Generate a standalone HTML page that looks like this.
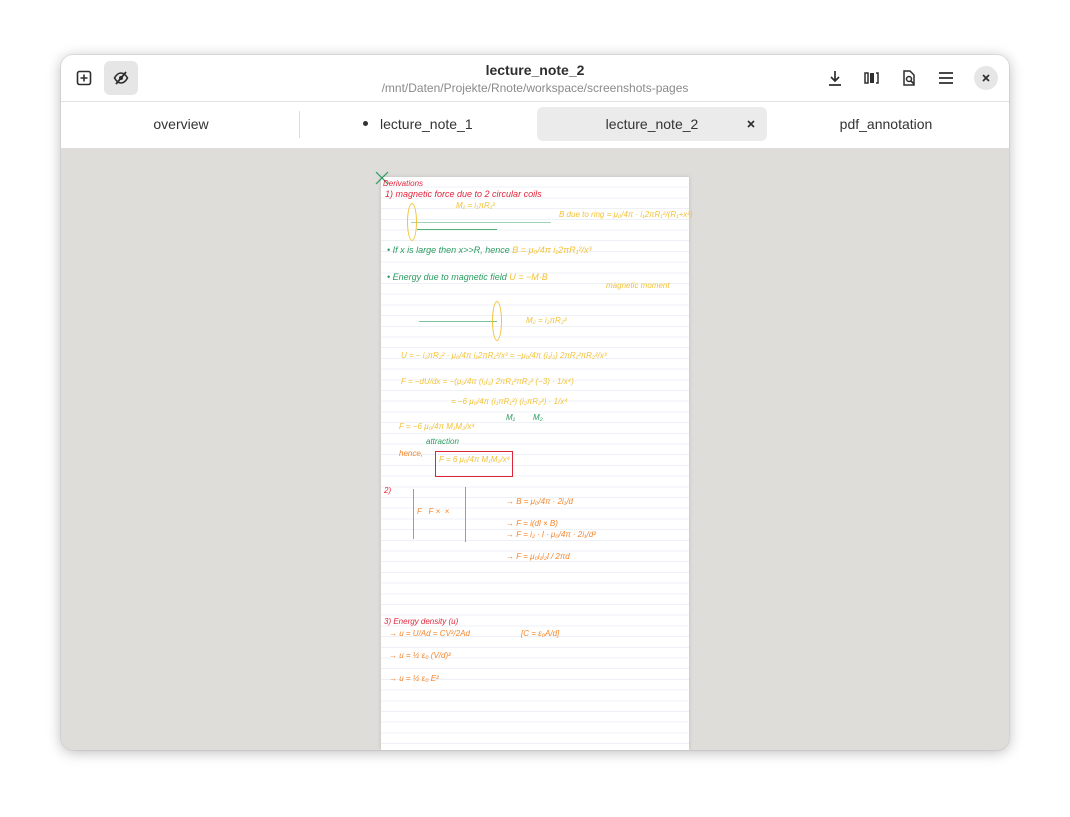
<!DOCTYPE html>
<html><head><meta charset="utf-8"><style>
*{margin:0;padding:0;box-sizing:border-box}
body{width:1070px;height:817px;background:#fff;font-family:"Liberation Sans",sans-serif;position:relative;overflow:hidden}
.win{position:absolute;left:61px;top:55px;width:948px;height:695px;border-radius:12px;overflow:hidden;background:#deddda;box-shadow:0 2px 14px rgba(0,0,0,.28),0 0 0 1px rgba(0,0,0,.06)}
.hdr{position:absolute;left:0;top:0;width:948px;height:47px;background:#fff;border-bottom:1px solid #e2e2e2}
.tabs{position:absolute;left:0;top:47px;width:948px;height:46px;background:#fff}
.t{position:absolute;font-size:14px;color:#333;text-align:center}
.btn{position:absolute;width:34px;height:34px;border-radius:6px;top:6px}
.page{position:absolute;left:320px;top:122px;width:308px;height:573px;background:#fff;
background-image:repeating-linear-gradient(to bottom,transparent 0,transparent 9.7px,#edf1f7 9.7px,#edf1f7 10.7px);box-shadow:0 0 4px rgba(0,0,0,.15)}
.h{position:absolute;font-style:italic;font-size:8px;white-space:nowrap;font-family:"Liberation Sans",sans-serif}
.r{color:#e0243a}.y{color:#f3c237}.g{color:#2b9b5f}.o{color:#f4852a}
</style></head><body>
<div class="win">
 <div class="hdr">
  <div class="btn" style="left:6px"></div>
  <svg style="position:absolute;left:15px;top:15px" width="16" height="16" viewBox="0 0 16 16"><rect x="1.5" y="1.5" width="13" height="13" rx="2" fill="none" stroke="#2e2e2e" stroke-width="1.6"/><path d="M8 4.5v7M4.5 8h7" stroke="#2e2e2e" stroke-width="1.6"/></svg>
  <div class="btn" style="left:43px;background:#e6e6e6"></div>
  <svg style="position:absolute;left:52px;top:15px" width="16" height="16" viewBox="0 0 16 16"><path d="M1.5 8c2-3.5 4.2-5 6.5-5s4.5 1.5 6.5 5c-2 3.5-4.2 5-6.5 5S3.5 11.5 1.5 8z" fill="none" stroke="#2e2e2e" stroke-width="1.6"/><circle cx="8" cy="8" r="2" fill="#2e2e2e"/><path d="M3 14L13 2" stroke="#2e2e2e" stroke-width="1.8"/></svg>
  <div class="t" style="left:0;width:948px;top:7px;font-weight:bold;font-size:14px;color:#2e2e2e">lecture_note_2</div>
  <div class="t" style="left:0;width:948px;top:26px;font-size:12px;color:#8a8a8a">/mnt/Daten/Projekte/Rnote/workspace/screenshots-pages</div>
  <svg style="position:absolute;left:766px;top:15px" width="16" height="16" viewBox="0 0 16 16"><path d="M8 1v10M4 7l4 4 4-4M2 15h12" fill="none" stroke="#2e2e2e" stroke-width="1.7"/></svg>
  <svg style="position:absolute;left:803px;top:15px" width="16" height="16" viewBox="0 0 16 16"><rect x="1" y="3" width="3" height="10" fill="none" stroke="#2e2e2e" stroke-width="1.5"/><rect x="6" y="3" width="4" height="10" fill="#2e2e2e"/><path d="M12 3h2v10h-2" fill="none" stroke="#2e2e2e" stroke-width="1.5"/></svg>
  <svg style="position:absolute;left:840px;top:15px" width="16" height="16" viewBox="0 0 16 16"><path d="M3 1h6l4 4v10H3z" fill="none" stroke="#2e2e2e" stroke-width="1.5"/><circle cx="8" cy="9" r="2.5" fill="none" stroke="#2e2e2e" stroke-width="1.5"/><path d="M10 11l3 3" stroke="#2e2e2e" stroke-width="1.6"/></svg>
  <svg style="position:absolute;left:877px;top:15px" width="16" height="16" viewBox="0 0 16 16"><path d="M1 3h14M1 8h14M1 13h14" stroke="#2e2e2e" stroke-width="1.7"/></svg>
  <div style="position:absolute;left:913px;top:11px;width:24px;height:24px;border-radius:50%;background:#e6e6e6"></div>
  <svg style="position:absolute;left:921px;top:19px" width="8" height="8" viewBox="0 0 8 8"><path d="M1 1l6 6M7 1L1 7" stroke="#2e2e2e" stroke-width="1.7"/></svg>
 </div>
 <div class="tabs">
  <div class="t" style="left:0;width:240px;top:14px">overview</div>
  <div style="position:absolute;left:238px;top:9px;width:1px;height:27px;background:#dcdcdc"></div>
  <div style="position:absolute;left:302px;top:19px;width:5px;height:5px;border-radius:50%;background:#333"></div>
  <div class="t" style="left:319px;top:14px">lecture_note_1</div>
  <div style="position:absolute;left:476px;top:5px;width:230px;height:34px;border-radius:6px;background:#ebebeb"></div>
  <div class="t" style="left:476px;width:230px;top:14px">lecture_note_2</div>
  <svg style="position:absolute;left:686px;top:18px" width="8" height="8" viewBox="0 0 8 8"><path d="M1 1l6 6M7 1L1 7" stroke="#2e2e2e" stroke-width="1.6"/></svg>
  <div class="t" style="left:710px;width:230px;top:14px">pdf_annotation</div>
 </div>
 <div class="page">
  <svg style="position:absolute;left:-6px;top:-6px" width="14" height="14"><path d="M1 1l12 12M13 1L1 13" stroke="#2b9b5f" stroke-width="1.2"/></svg>
  <div class="h r" style="left:2px;top:2px">Derivations</div>
  <div class="h r" style="left:4px;top:12px;font-size:9px">1) magnetic force due to 2 circular coils</div>
  <div class="h y" style="left:75px;top:24px">M₁ = i₁πR₁²</div>
  <div class="h y" style="left:178px;top:33px">B due to ring = μ₀/4π · i₁2πR₁²/(R₁+x²)</div>
  <div style="position:absolute;left:30px;top:45px;width:140px;height:1px;background:#9fd4b4"></div>
  <div style="position:absolute;left:36px;top:52px;width:80px;height:1px;background:#4fb07a"></div>
  <div style="position:absolute;left:26px;top:26px;width:10px;height:38px;border:1px solid #f3c237;border-radius:50%"></div>
  <div class="h g" style="left:6px;top:68px;font-size:9px">• If x is large then  x>>R, hence  <span class="y">B = μ₀/4π i₁2πR₁²/x³</span></div>
  <div class="h g" style="left:6px;top:95px;font-size:9px">• Energy due to magnetic field  <span class="y">U = −M·B</span></div>
  <div class="h y" style="left:225px;top:104px">magnetic moment</div>
  <div style="position:absolute;left:38px;top:144px;width:78px;height:1px;background:#7cc39b"></div>
  <div style="position:absolute;left:111px;top:124px;width:10px;height:40px;border:1px solid #f3c237;border-radius:50%"></div>
  <div class="h y" style="left:145px;top:139px">M₂ = i₂πR₂²</div>
  <div class="h y" style="left:20px;top:174px">U = − i₂πR₂² · μ₀/4π i₁2πR₁²/x³ = −μ₀/4π (i₁i₂) 2πR₁²πR₂²/x³</div>
  <div class="h y" style="left:20px;top:200px">F = −dU/dx = −(μ₀/4π (i₁i₂) 2πR₁²πR₂² (−3) · 1/x⁴)</div>
  <div class="h y" style="left:70px;top:220px">= −6 μ₀/4π (i₁πR₁²) (i₂πR₂²) · 1/x⁴</div>
  <div class="h g" style="left:125px;top:236px">M₁&nbsp;&nbsp;&nbsp;&nbsp;&nbsp;&nbsp;&nbsp;&nbsp;M₂</div>
  <div class="h y" style="left:18px;top:245px">F = −6 μ₀/4π M₁M₂/x⁴</div>
  <div class="h g" style="left:45px;top:260px">attraction</div>
  <div class="h o" style="left:18px;top:272px">hence,</div>
  <div style="position:absolute;left:54px;top:274px;width:78px;height:26px;border:1px solid #e0243a"></div>
  <div class="h y" style="left:58px;top:278px">F = 6 μ₀/4π M₁M₂/x⁴</div>
  <div class="h r" style="left:3px;top:309px">2)</div>
  <div style="position:absolute;left:32px;top:312px;width:1px;height:50px;background:#f4852a"></div>
  <div style="position:absolute;left:84px;top:310px;width:1px;height:55px;background:#f4852a"></div>
  <div class="h o" style="left:36px;top:330px">F&nbsp;&nbsp;&nbsp;F ×&nbsp;&nbsp;×</div>
  <div class="h o" style="left:125px;top:320px">→ B = μ₀/4π · 2i₁/d</div>
  <div class="h o" style="left:125px;top:342px">→ F = i(dl × B)</div>
  <div class="h o" style="left:125px;top:353px">→ F = i₂ · l · μ₀/4π · 2i₁/d²</div>
  <div class="h o" style="left:125px;top:375px">→ F = μ₀i₁i₂l / 2πd</div>
  <div class="h r" style="left:3px;top:440px">3) Energy density (u)</div>
  <div class="h o" style="left:8px;top:452px">→ u = U/Ad = CV²/2Ad</div>
  <div class="h o" style="left:140px;top:452px">[C = ε₀A/d]</div>
  <div class="h o" style="left:8px;top:474px">→ u = ½ ε₀ (V/d)²</div>
  <div class="h o" style="left:8px;top:497px">→ u = ½ ε₀ E²</div>
 </div>
</div>
</body></html>
